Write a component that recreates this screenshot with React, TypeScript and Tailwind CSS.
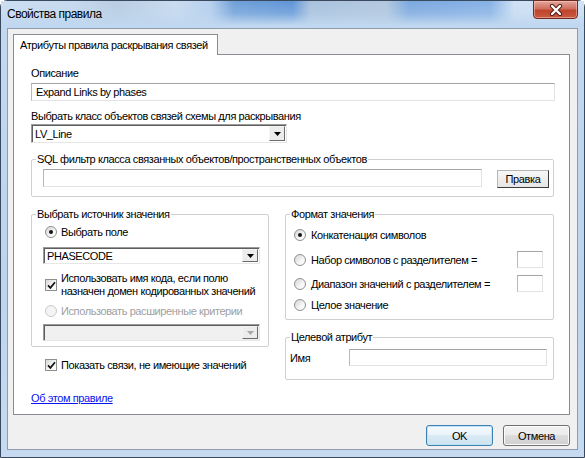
import * as React from 'react';

function Radio({ checked = false, disabled = false }: { checked?: boolean; disabled?: boolean }) {
  return (
    <span
      className={
        disabled
          ? 'flex h-[12px] w-[12px] shrink-0 items-center justify-center rounded-full border border-[#cacaca] bg-[#f4f4f4]'
          : 'flex h-[12px] w-[12px] shrink-0 items-center justify-center rounded-full border border-[#8e8f8f] bg-[linear-gradient(135deg,#d4d4d4,#f6f6f6_60%,#ffffff)]'
      }
    >
      {checked && <span className="h-[4px] w-[4px] rounded-full bg-[#151515]" />}
    </span>
  );
}

function Check() {
  return (
    <span className="flex h-[12px] w-[12px] shrink-0 items-center justify-center border border-[#8e8f8f] bg-[linear-gradient(135deg,#d8d8d8,#f8f8f8_60%,#ffffff)]">
      <svg width="9" height="9" viewBox="0 0 9 9">
        <path d="M1 4.4 L3.4 6.9 L8 1.2" stroke="#141414" strokeWidth="1.7" fill="none" />
      </svg>
    </span>
  );
}

function TextBox({ value = '', className = '' }: { value?: string; className?: string }) {
  return (
    <div
      className={
        'flex items-center border border-t-[#a5a5a5] border-l-[#b8b8b8] border-r-[#e3e3e3] border-b-[#e3e3e3] bg-white pl-[4px] ' +
        className
      }
    >
      {value}
    </div>
  );
}

function Combo({ value = '', disabled = false, className = '' }: { value?: string; disabled?: boolean; className?: string }) {
  return (
    <div
      className={
        (disabled ? 'bg-[#f0f0f0] ' : 'bg-white ') +
        'flex items-stretch border border-t-[#9a9a9a] border-l-[#9a9a9a] border-r-[#e6e6e6] border-b-[#e6e6e6] shadow-[inset_1px_1px_0_#5e5e5e] ' +
        className
      }
    >
      <div className="flex flex-1 items-center pl-[3px] pt-px">{value}</div>
      <div className="my-px mr-px flex w-[16px] items-center justify-center border border-t-[#f4f4f4] border-l-[#f4f4f4] border-r-[#6b6b6b] border-b-[#6b6b6b] bg-[#ececec]">
        <svg width="7" height="4" viewBox="0 0 7 4">
          <path d="M0 0 H7 L3.5 4 Z" fill={disabled ? '#a8a8a8' : '#000'} />
        </svg>
      </div>
    </div>
  );
}

function Group({ title, className = '', children }: { title: string; className?: string; children: React.ReactNode }) {
  return (
    <fieldset className={'rounded-[2px] border border-[#d0d0d0] ' + className}>
      <legend className="ml-[4px] px-[1px] leading-[14px]">{title}</legend>
      {children}
    </fieldset>
  );
}

export default function App() {
  return (
    <div className="h-[458px] w-[585px] overflow-hidden bg-white font-['Liberation_Sans',Arial,sans-serif] text-[11px] leading-[14px] tracking-[-0.4px] text-black">
      {/* Aero window frame */}
      <div className="relative flex h-[458px] w-[585px] flex-col rounded-t-[7px] border border-[#3a4a5e] bg-[linear-gradient(180deg,#c3d9f0,#bcd4ee_60%,#c6dbf1)]">
        {/* Title bar */}
        <div className="flex h-[27px] items-center bg-[linear-gradient(180deg,rgba(196,218,241,0)_0%,rgba(196,218,241,0.25)_45%,#c0d7ef_90%),linear-gradient(90deg,#cddff2_0%,#c6d9ee_12%,#b9cde2_20%,#c9dcf0_30%,#b6d0ed_36%,#6f9fd8_40%,#5f95d6_50%,#a9c2dd_53%,#b3c8de_66%,#7ba8df_70%,#87b2e6_84%,#cfe1f4_88%,#d2e3f5_100%)] pl-[6px]">
          <span className="text-[12px] leading-[15px] tracking-[-0.5px] text-black">Свойства правила</span>
        </div>

        {/* Close button */}
        <div className="absolute right-[6px] top-[-1px] flex h-[19px] w-[45px] items-center justify-center rounded-b-[4px] border border-[#6e2a22] bg-[linear-gradient(180deg,#e3a69b_0%,#d0705f_45%,#c0432d_55%,#c95a40_100%)] shadow-[inset_0_0_0_1px_rgba(255,220,210,0.45)]">
          <svg width="14" height="12" viewBox="0 0 14 12">
            <path d="M3 2 L11 10 M11 2 L3 10" stroke="#4a1a14" strokeWidth="4.2" strokeLinecap="round" />
            <path d="M3 2 L11 10 M11 2 L3 10" stroke="#ffffff" strokeWidth="2.4" strokeLinecap="round" />
          </svg>
        </div>

        {/* Client area */}
        <div className="mx-[6px] flex h-[422px] flex-col border border-[#8e9cae] bg-[#f0f0f0] pl-[5px] pr-[7px] pt-[5px]">
          {/* Tab */}
          <div className="relative z-10 -mb-px flex h-[21px] w-[205px] items-center whitespace-nowrap border border-b-0 border-[#898c95] bg-white pl-[6px]">
            Атрибуты правила раскрывания связей
          </div>

          {/* Tab page */}
          <div className="flex h-[361px] flex-col border border-[#898c95] bg-white pl-[17px] pt-[11px]">
            <div>Описание</div>
            <TextBox value="Expand Links by phases" className="mt-[3px] h-[18px] w-[524px]" />

            <div className="mt-[8px]">Выбрать класс объектов связей схемы для раскрывания</div>
            <Combo value="LV_Line" className="mt-[1px] h-[19px] w-[256px]" />

            <Group title="SQL фильтр класса связанных объектов/пространственных объектов" className="mt-[9px] w-[523px]">
              <div className="mt-[3px] flex items-start pb-[8px] pl-[11px]">
                <TextBox className="h-[18px] w-[439px]" />
                <div className="ml-[15px] mt-px flex h-[18px] w-[52px] items-center justify-center border border-t-[#b5b5b5] border-l-[#b5b5b5] border-r-[#3c3c3c] border-b-[#3c3c3c] bg-[linear-gradient(180deg,#f7f7f7,#e6e6e6)]">
                  Правка
                </div>
              </div>
            </Group>

            <div className="mt-[10px] flex gap-[16px]">
              {/* Left column */}
              <div className="flex w-[238px] flex-col">
                <Group title="Выбрать источник значения" className="w-[238px]">
                  <div className="flex flex-col pb-[5px] pl-[11px]">
                    <div className="ml-[2px] mt-[4px] flex h-[14px] items-center gap-[4px]">
                      <Radio checked />
                      <span>Выбрать поле</span>
                    </div>
                    <Combo value="PHASECODE" className="mt-[8px] h-[17px] w-[217px]" />
                    <div className="ml-[2px] mt-[8px] flex items-center gap-[4px] leading-[13px]">
                      <Check />
                      <span className="whitespace-nowrap">
                        Использовать имя кода, если полю
                        <br />
                        назначен домен кодированных значений
                      </span>
                    </div>
                    <div className="ml-[2px] mt-[6px] flex h-[14px] items-center gap-[4px] text-[#a0a0a0]">
                      <Radio disabled />
                      <span>Использовать расширенные критерии</span>
                    </div>
                    <Combo disabled className="mt-[6px] h-[17px] w-[217px]" />
                  </div>
                </Group>

                <div className="ml-[14px] mt-[11px] flex h-[14px] items-center gap-[4px]">
                  <Check />
                  <span>Показать связи, не имеющие значений</span>
                </div>

                <a href="#" className="mt-[19px] self-start text-[#0a14f0] underline">
                  Об этом правиле
                </a>
              </div>

              {/* Right column */}
              <div className="flex w-[269px] flex-col">
                <Group title="Формат значения" className="w-[269px]">
                  <div className="flex flex-col pb-[7px] pl-[8px] pr-[10px]">
                    <div className="mt-[7px] flex h-[14px] items-center gap-[5px]">
                      <Radio checked />
                      <span>Конкатенация символов</span>
                    </div>
                    <div className="mt-[9px] flex h-[17px] items-center gap-[5px]">
                      <Radio />
                      <span className="flex-1">Набор символов с разделителем =</span>
                      <TextBox className="h-[17px] w-[26px]" />
                    </div>
                    <div className="mt-[7px] flex h-[17px] items-center gap-[5px]">
                      <Radio />
                      <span className="flex-1">Диапазон значений с разделителем =</span>
                      <TextBox className="h-[17px] w-[26px]" />
                    </div>
                    <div className="mt-[6px] flex h-[14px] items-center gap-[5px]">
                      <Radio />
                      <span>Целое значение</span>
                    </div>
                  </div>
                </Group>

                <Group title="Целевой атрибут" className="mt-[10px] w-[269px]">
                  <div className="mt-[5px] flex items-center pb-[13px] pl-[4px]">
                    <span className="w-[59px]">Имя</span>
                    <TextBox className="h-[17px] w-[198px]" />
                  </div>
                </Group>
              </div>
            </div>
          </div>

          {/* Dialog buttons */}
          <div className="mt-[10px] flex justify-end gap-[10px]">
            <div className="flex h-[21px] w-[67px] items-center justify-center rounded-[3px] border border-[#3c7fb1] bg-[linear-gradient(180deg,#f4f9fc_0%,#e9f3f9_50%,#d9eaf4_50%,#cde3f0_100%)] shadow-[inset_0_0_0_1px_#bfe4f7]">
              OK
            </div>
            <div className="flex h-[21px] w-[67px] items-center justify-center rounded-[3px] border border-[#707070] bg-[linear-gradient(180deg,#f2f2f2_0%,#ebebeb_50%,#dddddd_50%,#cfcfcf_100%)] shadow-[inset_0_0_0_1px_#fbfbfb]">
              Отмена
            </div>
          </div>
        </div>
      </div>
    </div>
  );
}
